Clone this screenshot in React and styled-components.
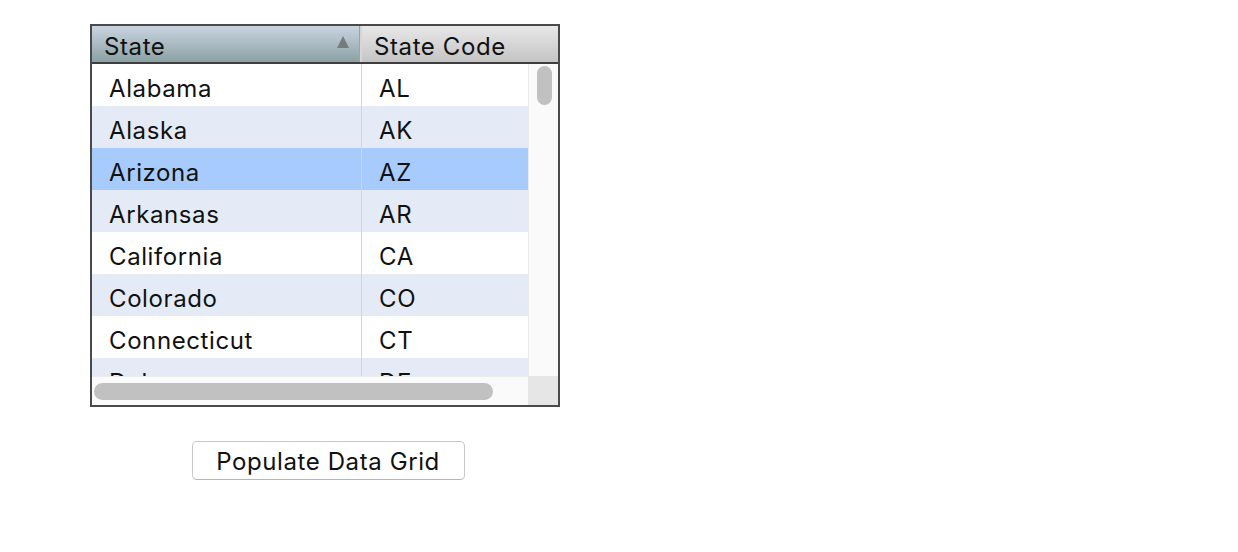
import React, { useState } from 'react';
import styled, { createGlobalStyle } from 'styled-components';

const GlobalStyle = createGlobalStyle`
    html, body {
        margin: 0;
        padding: 0;
        background: #ffffff;
        font-family: Inter, "Noto Sans", "Liberation Sans", sans-serif;
        color: #111;
    }
`

const Page = styled.div`
    padding: 24px 0 0 90px;
    display: flex;
`

const Column = styled.div`
    display: flex;
    flex-direction: column;
    align-items: center;
    width: 470px;
`

const Grid = styled.div`
    width: 470px;
    height: 383px;
    box-sizing: border-box;
    border: 2px solid #4a4a4a;
    display: grid;
    grid-template-columns: 436px 1fr;
    grid-template-rows: 38px 312px 1fr;
    background: #fff;
`

const Header = styled.div`
    grid-column: 1 / 3;
    display: flex;
    border-bottom: 2px solid #3e3e3e;
    box-sizing: border-box;
`

const HeaderCell = styled.div`
    position: relative;
    box-sizing: border-box;
    width: ${p => p.$width || 'auto'};
    flex: ${p => p.$grow ? 1 : 'none'};
    display: flex;
    align-items: center;
    padding: 5px 0 0 12px;
    font-size: 24px;
    letter-spacing: 0.6px;
    color: #111;
    background: ${p => p.$sorted
        ? 'linear-gradient(#c9d4df, #aebdc6 45%, #8aa1a3)'
        : 'linear-gradient(#e8e8e8, #d6d6d6 50%, #c4c4c4)'};
    border-right: ${p => p.$sorted ? '2px solid #d6d6d6' : 'none'};
    box-shadow: ${p => p.$sorted ? 'inset -1px 0 0 #9aa4a8' : 'none'};
`

const SortArrow = styled.span`
    position: absolute;
    right: 11px;
    top: 10px;
    width: 0;
    height: 0;
    border-left: 6px solid transparent;
    border-right: 6px solid transparent;
    border-bottom: 12px solid #747c7e;
`

const Body = styled.div`
    overflow: hidden;
    position: relative;
`

const Row = styled.div`
    display: flex;
    height: 42px;
    background: ${p => p.$selected ? '#a8cbfd' : p.$odd ? '#e4ebf6' : '#ffffff'};
    cursor: default;
`

const Cell = styled.div`
    box-sizing: border-box;
    width: ${p => p.$width};
    display: flex;
    align-items: center;
    padding-left: 17px;
    padding-top: 6px;
    font-size: 24px;
    letter-spacing: 0.6px;
    border-right: ${p => p.$divider ? '1px solid #d4d4d4' : 'none'};
`

const VScroll = styled.div`
    background: #fafafa;
    border-left: 1px solid #ececec;
    display: flex;
    justify-content: center;
    padding-top: 2px;
`

const VThumb = styled.div`
    width: 15px;
    height: 39px;
    margin-left: 2px;
    border-radius: 8px;
    background: #c1c1c1;
`

const HScroll = styled.div`
    background: #fafafa;
    border-top: 1px solid #ececec;
    padding: 6px 0 0 2px;
`

const HThumb = styled.div`
    width: 399px;
    height: 17px;
    border-radius: 9px;
    background: #c1c1c1;
`

const Corner = styled.div`
    background: #e6e6e6;
`

const Button = styled.button`
    margin-top: 34px;
    margin-left: 6px;
    width: 273px;
    height: 39px;
    background: #fff;
    border: 1px solid #c9c9c9;
    border-bottom-color: #b5b5b5;
    border-radius: 5px;
    box-shadow: 0 1px 1px rgba(0, 0, 0, 0.08);
    font-family: Inter, "Noto Sans", "Liberation Sans", sans-serif;
    font-size: 24px;
    letter-spacing: 0.6px;
    color: #111;
    padding: 2px 0 0;
    cursor: pointer;
`

const states = [
    ['Alabama', 'AL'],
    ['Alaska', 'AK'],
    ['Arizona', 'AZ'],
    ['Arkansas', 'AR'],
    ['California', 'CA'],
    ['Colorado', 'CO'],
    ['Connecticut', 'CT'],
    ['Delaware', 'DE'],
]

const App = () => {
    const [selected, setSelected] = useState(2);

    return (
        <Page>
            <GlobalStyle />
            <Column>
                <Grid>
                    <Header>
                        <HeaderCell $width="270px" $sorted>
                            State
                            <SortArrow />
                        </HeaderCell>
                        <HeaderCell $grow>State Code</HeaderCell>
                    </Header>
                    <Body>
                        {states.map(([name, code], i) => (
                            <Row key={code} $odd={i % 2 === 1} $selected={i === selected} onClick={() => setSelected(i)}>
                                <Cell $width="270px" $divider>{name}</Cell>
                                <Cell $width="166px">{code}</Cell>
                            </Row>
                        ))}
                    </Body>
                    <VScroll>
                        <VThumb />
                    </VScroll>
                    <HScroll>
                        <HThumb />
                    </HScroll>
                    <Corner />
                </Grid>
                <Button>Populate Data Grid</Button>
            </Column>
        </Page>
    );
}

export default App;
